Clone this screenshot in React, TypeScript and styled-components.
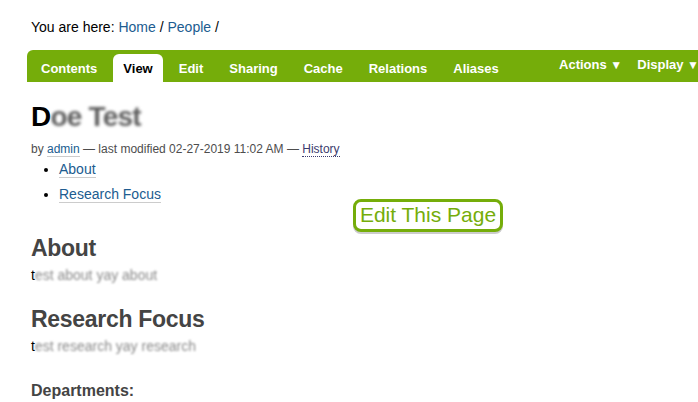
import styled, { createGlobalStyle } from "styled-components"

const GlobalStyle = createGlobalStyle`
    html, body {
        margin: 0;
        padding: 0;
        background: #ffffff;
        overflow: hidden;
    }
    body {
        font-family: "Liberation Sans", Arial, sans-serif;
        color: #000;
    }
`

const tabs = ["Contents", "View", "Edit", "Sharing", "Cache", "Relations", "Aliases"]

export default function App() {
    return (
        <Page>
            <GlobalStyle />
            <Breadcrumbs>
                You are here: <Crumb href="#">Home</Crumb> / <Crumb href="#">People</Crumb> /
            </Breadcrumbs>
            <TabBar>
                <TabList>
                    {tabs.map((t) => (
                        <Tab key={t} $active={t === "View"}>{t}</Tab>
                    ))}
                </TabList>
                <MenuGroup>
                    <Menu>Actions <Arrow>▼</Arrow></Menu>
                    <Menu>Display <Arrow>▼</Arrow></Menu>
                </MenuGroup>
            </TabBar>
            <Content>
                <Title>D<Blurred $strong>oe Test</Blurred></Title>
                <Byline>
                    by <AuthorLink href="#">admin</AuthorLink> — last modified 02-27-2019 11:02 AM — <HistoryLink href="#">History</HistoryLink>
                </Byline>
                <Toc>
                    <li><TocLink href="#">About</TocLink></li>
                    <li><TocLink href="#">Research Focus</TocLink></li>
                </Toc>
                <EditButton>Edit This Page</EditButton>
                <Heading>About</Heading>
                <BodyText>t<Blurred>est about yay about</Blurred></BodyText>
                <Heading>Research Focus</Heading>
                <BodyText>t<Blurred>est research yay research</Blurred></BodyText>
                <Label>Departments:</Label>
            </Content>
        </Page>
    )
}

const Page = styled.div`
    width: 698px;
    height: 402px;
    overflow: hidden;
    padding-left: 27px;
    box-sizing: border-box;
`

const Breadcrumbs = styled.div`
    padding: 19px 0 0 4px;
    font-size: 14px;
    line-height: 16px;
    color: #000;
    height: 50px;
    box-sizing: border-box;
`

const Crumb = styled.a`
    color: #205c90;
    text-decoration: none;
`

const TabBar = styled.div`
    display: flex;
    align-items: flex-end;
    height: 32px;
    margin-right: -10px;
    padding: 0 9px 0 4px;
    background: #75ad0a;
    border-top-left-radius: 6px;
`

const TabList = styled.div`
    display: flex;
    gap: 6px;
    height: 28px;
`

const Tab = styled.div<{ $active?: boolean }>`
    padding: 0 10px;
    font-size: 13px;
    font-weight: bold;
    line-height: 29px;
    color: ${(p) => (p.$active ? "#000" : "#fff")};
    background: ${(p) => (p.$active ? "#fff" : "transparent")};
    border-radius: 6px 6px 0 0;
`

const MenuGroup = styled.div`
    display: flex;
    gap: 15px;
    margin-left: auto;
    align-self: center;
    margin-top: -3px;
`

const Menu = styled.div`
    font-size: 13px;
    font-weight: bold;
    color: #fff;
    white-space: nowrap;
`

const Arrow = styled.span`
    font-size: 12px;
`

const Content = styled.div`
    position: relative;
    padding-left: 4px;
`

const Title = styled.h1`
    margin: 19px 0 0;
    font-size: 28px;
    line-height: 32px;
    font-weight: bold;
    color: #000;
    letter-spacing: -0.8px;
`

const Blurred = styled.span<{ $strong?: boolean }>`
    color: ${(p) => (p.$strong ? "#5e5e5e" : "#8a8a8a")};
    filter: blur(${(p) => (p.$strong ? "1.8px" : "1.2px")});
`

const Byline = styled.div`
    margin-top: 9px;
    font-size: 12px;
    line-height: 14px;
    color: #4d4d4d;
`

const AuthorLink = styled.a`
    color: #205c90;
    text-decoration: none;
    border-bottom: 1px solid #ccc;
`

const HistoryLink = styled.a`
    color: #3b3b6e;
    text-decoration: none;
    border-bottom: 1px dotted #3b3b6e;
`

const Toc = styled.ul`
    margin: 4px 0 31px;
    padding-left: 28px;
    font-size: 14px;
    line-height: 18px;
    li {
        margin-bottom: 7px;
    }
`

const TocLink = styled.a`
    color: #205c90;
    text-decoration: none;
    border-bottom: 1px solid #ccc;
`

const EditButton = styled.div`
    position: absolute;
    left: 326px;
    top: 98px;
    width: 150px;
    height: 33px;
    box-sizing: border-box;
    border: 3px solid #75ad0a;
    box-shadow: 0 2px 0 #ccc;
    border-radius: 8px;
    font-size: 21px;
    line-height: 26px;
    text-align: center;
    color: #75ad0a;
    background: #fff;
    white-space: nowrap;
`

const Heading = styled.h2`
    margin: 21px 0 0;
    font-size: 23px;
    line-height: 28px;
    font-weight: bold;
    color: #444;
    letter-spacing: -0.3px;
`

const BodyText = styled.p`
    margin: 4px 0 0;
    font-size: 14px;
    line-height: 18px;
    color: #000;
`

const Label = styled.div`
    margin-top: 27px;
    font-size: 16px;
    line-height: 18px;
    font-weight: bold;
    color: #444;
`
